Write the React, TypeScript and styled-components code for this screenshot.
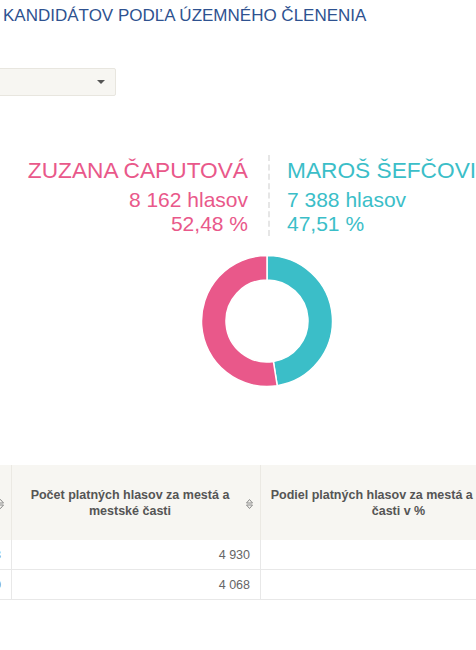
import styled, { createGlobalStyle } from 'styled-components'

const GlobalStyle = createGlobalStyle`
  html, body {
    margin: 0;
    padding: 0;
    background: #ffffff;
    overflow: hidden;
  }
  body {
    font-family: "Liberation Sans", Arial, sans-serif;
  }
`

const PINK = '#e9588a'
const TEAL = '#3bbec8'

const candidates = [
  { name: 'ZUZANA ČAPUTOVÁ', votes: '8 162 hlasov', share: '52,48 %', color: PINK, side: 'left' },
  { name: 'MAROŠ ŠEFČOVIČ', votes: '7 388 hlasov', share: '47,51 %', color: TEAL, side: 'right' },
]

const rows = [
  { first: '3', count: '4 930', share: '' },
  { first: '0', count: '4 068', share: '' },
]

const Page = styled.div`
  width: 476px;
  height: 650px;
  overflow: hidden;
  position: relative;
`

const Heading = styled.h2`
  margin: 0;
  padding: 6px 0 0 3px;
  font-size: 17px;
  font-weight: 400;
  line-height: 20px;
  color: #2e5290;
  white-space: nowrap;
`

const Select = styled.div`
  margin: 42px 0 0 -60px;
  width: 176px;
  height: 28px;
  box-sizing: border-box;
  background: #f7f6f2;
  border: 1px solid #e8e6df;
  border-radius: 2px;
  display: flex;
  align-items: center;
  justify-content: flex-end;
  padding-right: 10px;
`

const Caret = styled.span`
  width: 0;
  height: 0;
  border-left: 4px solid transparent;
  border-right: 4px solid transparent;
  border-top: 4px solid #555;
`

const Candidates = styled.div`
  margin-top: 59px;
  display: grid;
  grid-template-columns: 268px 1fr;
  white-space: nowrap;
`

const Candidate = styled.div<{ $color: string; $side: string }>`
  color: ${(p) => p.$color};
  text-align: ${(p) => (p.$side === 'left' ? 'right' : 'left')};
  padding: ${(p) => (p.$side === 'left' ? '0 20px 0 0' : '0 0 0 17px')};
  ${(p) => p.$side === 'right' && 'border-left: 2px dashed #e6e6e6;'}
`

const Name = styled.div`
  font-size: 22.7px;
  line-height: 30px;
  height: 33px;
`

const Figure = styled.div`
  font-size: 21px;
  line-height: 24px;
`

const ChartWrap = styled.div`
  margin: 19px 0 0 201px;
  width: 132px;
  height: 132px;
`

const Table = styled.table`
  margin: 78px 0 0 -100px;
  border-collapse: collapse;
  table-layout: fixed;
  width: 644px;
  font-size: 12.5px;
  color: #555;
`

const HeadCell = styled.th<{ $wide?: boolean }>`
  background: #f7f6f2;
  border-left: 1px solid #ebe9e3;
  border-right: 1px solid #ebe9e3;
  height: 75px;
  padding: ${(p) => (p.$wide ? '0 16px 0 8px' : '0 22px 0 10px')};
  font-weight: 700;
  line-height: 16px;
  text-align: center;
  vertical-align: middle;
  position: relative;
  box-sizing: border-box;
`

const SortIcon = styled.svg`
  position: absolute;
  right: 7px;
  top: 50%;
  margin-top: -4px;
`

const Cell = styled.td`
  border: 1px solid #e8e8e8;
  border-top: none;
  height: 29px;
  padding: 0 10px;
  text-align: right;
  vertical-align: middle;
  color: #666;
`

const Sort = () => (
  <SortIcon width="7" height="10" viewBox="0 0 7 10">
    <path d="M3.5 0.5 L6.5 4 H0.5 Z" fill="none" stroke="#888" strokeWidth="1" />
    <path d="M3.5 9.5 L6.5 6 H0.5 Z" fill="none" stroke="#888" strokeWidth="1" />
  </SortIcon>
)

const arc = (cx: number, cy: number, r0: number, r1: number, a0: number, a1: number) => {
  const pt = (r: number, a: number) => {
    const rad = ((a - 90) * Math.PI) / 180
    return `${cx + r * Math.cos(rad)} ${cy + r * Math.sin(rad)}`
  }
  const large = a1 - a0 > 180 ? 1 : 0
  return `M${pt(r1, a0)} A${r1} ${r1} 0 ${large} 1 ${pt(r1, a1)} L${pt(r0, a1)} A${r0} ${r0} 0 ${large} 0 ${pt(r0, a0)} Z`
}

const Donut = () => {
  const split = 360 * 0.4751
  return (
    <svg width="132" height="132" viewBox="0 0 132 132">
      <path d={arc(66, 66, 41, 65.5, 0, split)} fill={TEAL} stroke="#fff" strokeWidth="1.5" />
      <path d={arc(66, 66, 41, 65.5, split, 360)} fill={PINK} stroke="#fff" strokeWidth="1.5" />
    </svg>
  )
}

export default function App() {
  return (
    <Page>
      <GlobalStyle />
      <Heading>KANDIDÁTOV PODĽA ÚZEMNÉHO ČLENENIA</Heading>
      <Select>
        <Caret />
      </Select>
      <Candidates>
        {candidates.map((c) => (
          <Candidate key={c.name} $color={c.color} $side={c.side}>
            <Name>{c.name}</Name>
            <Figure>{c.votes}</Figure>
            <Figure>{c.share}</Figure>
          </Candidate>
        ))}
      </Candidates>
      <ChartWrap>
        <Donut />
      </ChartWrap>
      <Table>
        <colgroup>
          <col style={{ width: 111 }} />
          <col style={{ width: 249 }} />
          <col style={{ width: 284 }} />
        </colgroup>
        <thead>
          <tr>
            <HeadCell>
              Názov obce
              <Sort />
            </HeadCell>
            <HeadCell>
              Počet platných hlasov za mestá a mestské časti
              <Sort />
            </HeadCell>
            <HeadCell $wide>
              Podiel platných hlasov za mestá a mestské časti v %
              <Sort />
            </HeadCell>
          </tr>
        </thead>
        <tbody>
          {rows.map((r) => (
            <tr key={r.count}>
              <Cell>{r.first}</Cell>
              <Cell>{r.count}</Cell>
              <Cell>{r.share}</Cell>
            </tr>
          ))}
        </tbody>
      </Table>
    </Page>
  )
}
